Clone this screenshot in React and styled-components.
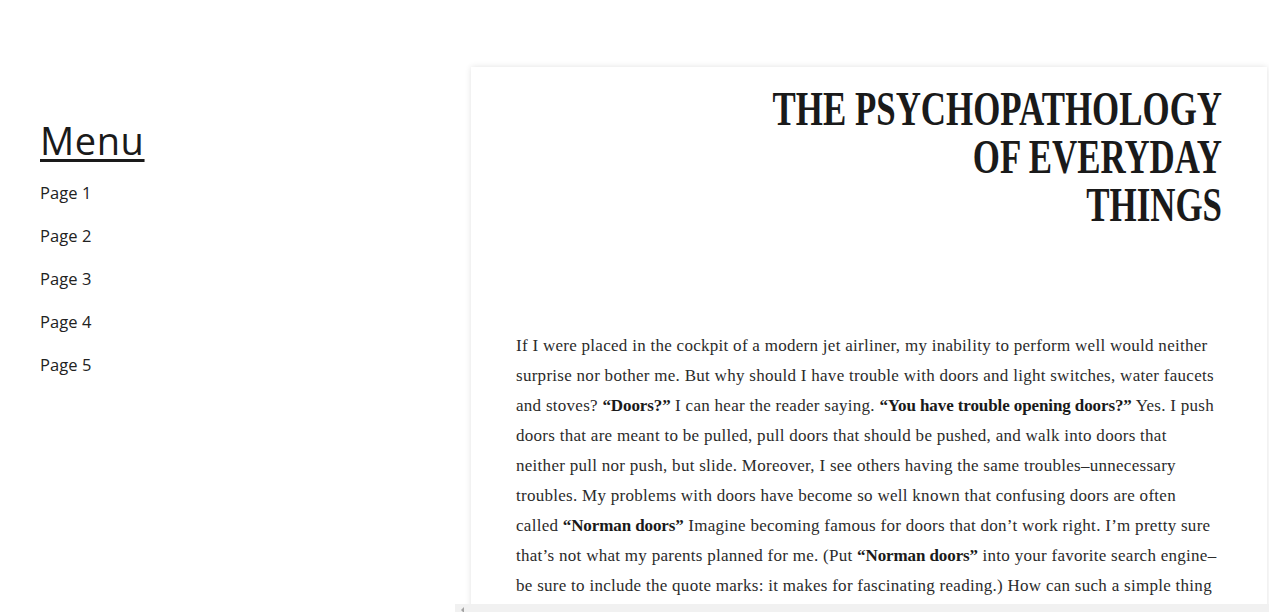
import React from "react";
import styled, { createGlobalStyle } from "styled-components";

const GlobalStyle = createGlobalStyle`
  html, body {
    margin: 0;
    padding: 0;
    background: #ffffff;
    overflow: hidden;
  }
  body {
    font-family: "Open Sans", "DejaVu Sans", sans-serif;
    color: #1e1e1e;
  }
`;

const Layout = styled.div`
  display: grid;
  grid-template-columns: 455px 1fr;
  width: 100%;
  height: 612px;
`;

const Sidebar = styled.nav`
  padding: 117px 40px 0 40px;
  display: flex;
  flex-direction: column;
  align-items: flex-start;
`;

const MenuTitle = styled.h2`
  margin: 0 0 18px 0;
  font-family: "Open Sans", "DejaVu Sans", sans-serif;
  font-weight: 500;
  font-size: 38px;
  line-height: 46px;
  letter-spacing: 0.6px;
  color: #1a1a1a;
  text-decoration: underline;
  text-decoration-thickness: 3px;
  text-underline-offset: 4px;
`;

const LinkList = styled.ul`
  list-style: none;
  margin: 0;
  padding: 0;
  display: flex;
  flex-direction: column;
  gap: 20px;
`;

const MenuLink = styled.a`
  display: block;
  font-size: 16.5px;
  line-height: 23px;
  color: #222;
  text-decoration: none;
  letter-spacing: 0.1px;
`;

const RightColumn = styled.div`
  display: flex;
  flex-direction: column;
  height: 612px;
  min-width: 0;
`;

const Scroller = styled.main`
  flex: 1;
  overflow: hidden;
  padding: 67px 2px 0 16px;
`;

const ScrollTrack = styled.div`
  flex: 0 0 8px;
  background: #f1f1f1;
  position: relative;
`;

const ScrollArrow = styled.span`
  position: absolute;
  left: 6px;
  top: 3px;
  width: 0;
  height: 0;
  border-top: 3px solid transparent;
  border-bottom: 3px solid transparent;
  border-right: 3px solid #a3a3a3;
`;

const Card = styled.article`
  background: #fff;
  box-shadow: 0 0 6px rgba(0, 0, 0, 0.12);
  padding: 18px 45px 40px 45px;
`;

const Title = styled.h1`
  margin: 0;
  font-family: "Liberation Serif", "Times New Roman", serif;
  font-weight: 700;
  font-size: 48px;
  line-height: 48px;
  color: #1a1a1a;
  text-align: right;
  transform: scaleX(0.727);
  transform-origin: right center;
`;

const TitleLine = styled.span`
  display: block;
  white-space: nowrap;
`;

const Body = styled.p`
  margin: 102px 0 0 0;
  font-family: "Liberation Serif", "Times New Roman", serif;
  font-size: 17px;
  line-height: 30px;
  letter-spacing: 0.28px;
  color: #2b2b2b;
  white-space: nowrap;
`;

const Strong = styled.strong`
  font-weight: 700;
  color: #1a1a1a;
  letter-spacing: -0.1px;
`;

const pages = ["Page 1", "Page 2", "Page 3", "Page 4", "Page 5"];

const D = "“Doors?”";
const Y = "“You have trouble opening doors?”";
const N = "“Norman doors”";

export default function App() {
  return (
    <>
      <GlobalStyle />
      <Layout>
        <Sidebar>
          <MenuTitle>Menu</MenuTitle>
          <LinkList>
            {pages.map((p) => (
              <li key={p}>
                <MenuLink href="#">{p}</MenuLink>
              </li>
            ))}
          </LinkList>
        </Sidebar>
        <RightColumn>
          <Scroller>
            <Card>
              <Title>
                <TitleLine>THE PSYCHOPATHOLOGY</TitleLine>
                <TitleLine>OF EVERYDAY</TitleLine>
                <TitleLine>THINGS</TitleLine>
              </Title>
              <Body>
                If I were placed in the cockpit of a modern jet airliner, my inability to perform well would neither
                <br />
                surprise nor bother me. But why should I have trouble with doors and light switches, water faucets
                <br />
                and stoves? <Strong>{D}</Strong> I can hear the reader saying. <Strong>{Y}</Strong> Yes. I push
                <br />
                doors that are meant to be pulled, pull doors that should be pushed, and walk into doors that
                <br />
                neither pull nor push, but slide. Moreover, I see others having the same troubles–unnecessary
                <br />
                troubles. My problems with doors have become so well known that confusing doors are often
                <br />
                called <Strong>{N}</Strong> Imagine becoming famous for doors that don’t work right. I’m pretty sure
                <br />
                that’s not what my parents planned for me. (Put <Strong>{N}</Strong> into your favorite search engine–
                <br />
                be sure to include the quote marks: it makes for fascinating reading.) How can such a simple thing
                <br />
                as a door be so confusing? A door would seem to be about as simple a device as possible.
              </Body>
            </Card>
          </Scroller>
          <ScrollTrack>
            <ScrollArrow />
          </ScrollTrack>
        </RightColumn>
      </Layout>
    </>
  );
}
